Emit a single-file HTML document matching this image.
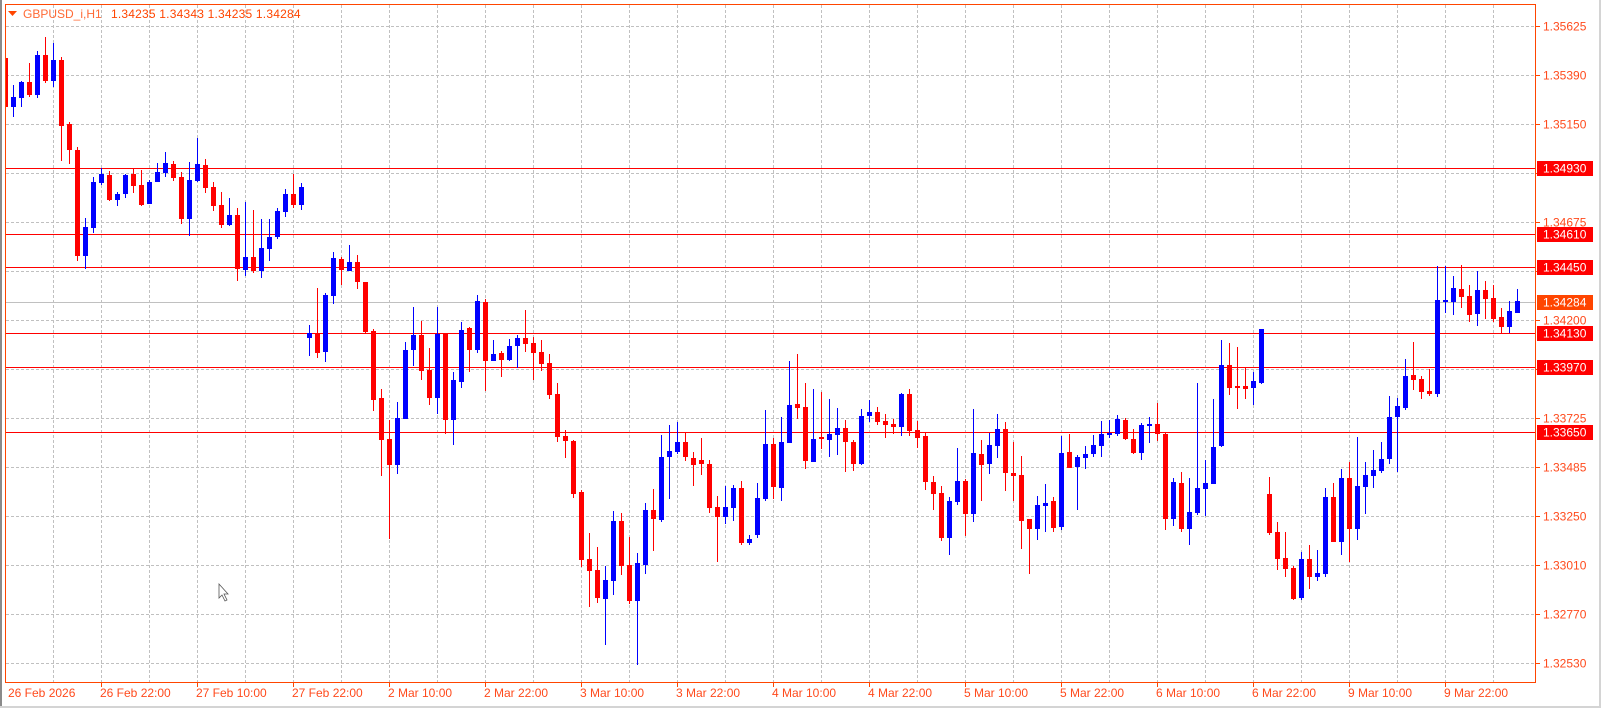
<!DOCTYPE html>
<html><head><meta charset="utf-8"><style>
html,body{margin:0;padding:0;background:#fff;}
body{width:1601px;height:708px;overflow:hidden;position:relative;font-family:"Liberation Sans",Arial,sans-serif;}
svg{position:absolute;left:0;top:0;}
</style></head><body>
<svg id="s" width="1601" height="708" xmlns="http://www.w3.org/2000/svg" font-family="Liberation Sans, Arial, sans-serif">
<rect x="0" y="0" width="1601" height="708" fill="#fff"/>
<rect x="0" y="0" width="2" height="708" fill="#8a8a8a"/>
<rect x="0" y="706" width="1601" height="2" fill="#d4d4d4"/>
<rect x="1599" y="0" width="2" height="708" fill="#d4d4d4"/>
<g id="grid" stroke="#c0c0c0" stroke-width="1" stroke-dasharray="3,2" shape-rendering="crispEdges"></g>
<g id="lines" shape-rendering="crispEdges">
<line x1="5" x2="1535" y1="302.5" y2="302.5" stroke="#c0c0c0"/>
<line x1="5" x2="1535" y1="168.5" y2="168.5" stroke="#ff0000"/>
<line x1="5" x2="1535" y1="234.5" y2="234.5" stroke="#ff0000"/>
<line x1="5" x2="1535" y1="267.5" y2="267.5" stroke="#ff0000"/>
<line x1="5" x2="1535" y1="333.5" y2="333.5" stroke="#ff0000"/>
<line x1="5" x2="1535" y1="367.5" y2="367.5" stroke="#ff0000"/>
<line x1="5" x2="1535" y1="432.5" y2="432.5" stroke="#ff0000"/>
</g>
<g id="c" shape-rendering="crispEdges"></g>
<rect x="5.5" y="4.5" width="1530" height="678" fill="none" stroke="#ff4500" stroke-width="1" shape-rendering="crispEdges"/>
<rect x="0" y="0" width="5" height="706" fill="#fff"/>
<rect x="0" y="0" width="2" height="706" fill="#8a8a8a"/>
<g id="ax" font-size="12" fill="#ff4a1c"></g>
<polygon points="8,11 17,11 12.5,16" fill="#ff4500"/>
<text x="23" y="18" font-size="12" fill="#ff6a35">GBPUSD_i,H1</text>
<text x="111" y="18" font-size="12" fill="#ff4500" letter-spacing="0.2">1.34235 1.34343 1.34235 1.34284</text>
<path d="M219,584 L219,598 L222,595 L225,601 L227,600 L224,594 L228,594 Z" fill="#fff" stroke="#555" stroke-width="0.8"/>
</svg>
<script>
var NS="http://www.w3.org/2000/svg";
function el(p,t,a,txt){var e=document.createElementNS(NS,t);for(var k in a)e.setAttribute(k,a[k]);if(txt)e.textContent=txt;p.appendChild(e);return e;}
var g=document.getElementById('grid');
for(var x=53;x<1535;x+=48)el(g,'line',{x1:x+.5,x2:x+.5,y1:5,y2:682});
for(var y=26;y<682;y+=49)el(g,'line',{x1:6,x2:1535,y1:y+.5,y2:y+.5});
var D=[[58,107,57,113],[107,97,85,117],[98,82,81,107],[82,95,63,97],[95,55,51,98],[55,81,37,83],[81,60,43,87],[60,126,57,161],[124,150,122,164],[150,256,147,261],
[256,227,218,269],[228,182,177,233],[183,174,168,185],[175,200,171,201],[200,194,192,206],[194,175,174,198],[174,186,168,193],[185,205,170,206],[204,182,180,204],[182,172,163,182],
[173,163,152,177],[164,178,161,181],[177,219,172,224],[219,180,162,236],[181,164,138,182],[165,188,159,193],[187,206,182,211],[205,225,192,228],[225,215,198,226],[215,269,208,281],
[270,257,202,276],[257,271,210,273],[271,248,219,278],[249,237,219,261],[237,211,208,239],[212,194,189,217],[194,205,174,208],[205,187,183,210],[338,333,325,356],[333,353,288,358],
[352,295,293,362],[296,258,252,304],[259,270,257,285],[271,262,245,271],[262,282,255,289],[282,332,282,334],[331,400,329,411],[398,440,389,476],[439,465,420,539],[465,418,402,474],
[419,350,342,419],[350,335,307,366],[335,371,321,380],[370,398,348,405],[398,334,307,414],[334,420,334,434],[420,380,372,445],[382,330,322,388],[328,350,327,372],[350,301,295,353],
[302,361,299,391],[361,354,340,361],[353,360,351,377],[360,346,339,361],[346,338,335,368],[338,344,310,352],[343,353,337,380],[352,364,340,371],[363,395,354,399],[394,437,383,442],
[436,441,430,458],[441,494,440,498],[492,560,490,567],[559,571,533,607],[570,598,547,603],[599,580,566,645],[581,521,511,595],[521,566,513,575],[565,601,537,604],[601,563,553,665],
[565,510,503,574],[510,519,489,551],[520,457,435,522],[457,451,425,499],[452,442,422,454],[442,457,433,461],[458,465,452,486],[460,464,438,475],[464,508,460,513],[507,517,496,562],
[517,507,486,524],[508,488,485,521],[488,543,481,545],[543,539,535,545],[535,498,483,538],[499,444,410,501],[444,487,438,499],[488,442,417,501],[443,405,361,443],[404,408,354,419],
[407,461,383,469],[462,439,389,462],[437,439,392,449],[440,434,399,457],[435,428,408,455],[428,442,420,472],[442,464,440,471],[464,416,409,465],[416,412,400,422],[412,422,407,425],
[421,425,414,438],[424,427,419,434],[427,394,393,436],[394,431,389,436],[430,438,421,448],[436,482,433,490],[482,494,476,510],[493,538,486,541],[538,501,497,555],[502,481,448,505],
[481,514,479,536],[514,453,409,522],[454,465,440,501],[464,445,433,474],[446,429,414,458],[429,473,422,491],[473,476,442,501],[475,521,456,549],[519,529,519,574],[529,505,496,540],
[506,503,484,532],[501,528,497,532],[527,453,436,530],[452,468,434,468],[467,457,455,510],[458,454,446,469],[454,445,435,457],[446,434,421,457],[435,433,420,438],[434,419,415,436],
[420,439,418,440],[439,453,429,454],[453,425,423,460],[426,424,417,443],[424,434,403,441],[434,519,433,530],[519,482,478,526],[483,529,472,532],[529,512,478,545],[513,488,383,515],
[489,483,460,516],[484,447,399,484],[446,365,340,447],[365,388,343,395],[386,388,347,409],[386,389,367,399],[388,381,372,405],[383,329,329,384],[494,533,477,535],[532,559,522,570],
[558,569,532,577],[568,599,566,600],[598,559,552,600],[559,577,545,589],[577,573,550,581],[574,497,488,577],[497,542,483,542],[542,478,469,555],[478,529,462,562],[529,486,437,540],
[487,475,462,514],[476,470,450,488],[471,459,442,473],[459,417,396,464],[417,406,398,472],[408,376,359,410],[375,380,342,390],[379,392,376,399],[391,394,369,396],[394,300,266,397],
[302,300,266,313],[302,288,276,315],[289,297,265,308],[296,315,285,322],[314,290,271,326],[290,299,281,319],[298,319,285,322],[317,327,308,333],[327,311,301,333],[313,301,289,313]];
var c=document.getElementById('c');
for(var i=0;i<D.length;i++){var d=D[i],x=5+8*i,up=d[1]<d[0],col=up?'#0000ff':'#ff0000';
var t=Math.min(d[0],d[1]),b=Math.max(d[0],d[1]);
el(c,'rect',{x:x,y:d[2],width:1,height:Math.max(1,d[3]-d[2]),fill:col});
el(c,'rect',{x:x-2,y:t,width:5,height:Math.max(2,b-t),fill:col});}
var ax=document.getElementById('ax');
var P=[["1.35625",26],["1.35390",75],["1.35150",124],["1.34675",222],["1.34200",320],["1.33725",418],["1.33485",467],["1.33250",516],["1.33010",565],["1.32770",614],["1.32530",663]];
for(var y=26;y<682;y+=49)el(ax,'rect',{x:1536,y:y,width:4,height:1,fill:'#ff4500'});
P.forEach(function(p){el(ax,'text',{x:1543,y:p[1]+4.5},p[0]);});
var B=[["1.34930",168,"#ff0000"],["1.34610",234,"#ff0000"],["1.34450",267,"#ff0000"],["1.34284",302,"#ff4500"],["1.34130",333,"#ff0000"],["1.33970",367,"#ff0000"],["1.33650",432,"#ff0000"]];
B.forEach(function(p){el(ax,'rect',{x:1537,y:p[1]-7,width:56,height:15,fill:p[2]});el(ax,'text',{x:1543,y:p[1]+4.5,fill:'#fff'},p[0]);});
el(ax,'text',{x:8,y:697},"26 Feb 2026");
var L=["26 Feb 22:00","27 Feb 10:00","27 Feb 22:00","2 Mar 10:00","2 Mar 22:00","3 Mar 10:00","3 Mar 22:00","4 Mar 10:00","4 Mar 22:00","5 Mar 10:00","5 Mar 22:00","6 Mar 10:00","6 Mar 22:00","9 Mar 10:00","9 Mar 22:00"];
L.forEach(function(s,i){var x=101+96*i;el(ax,'rect',{x:x,y:683,width:1,height:4,fill:'#ff4500'});el(ax,'text',{x:x-1,y:697},s);});
</script>
</body></html>
